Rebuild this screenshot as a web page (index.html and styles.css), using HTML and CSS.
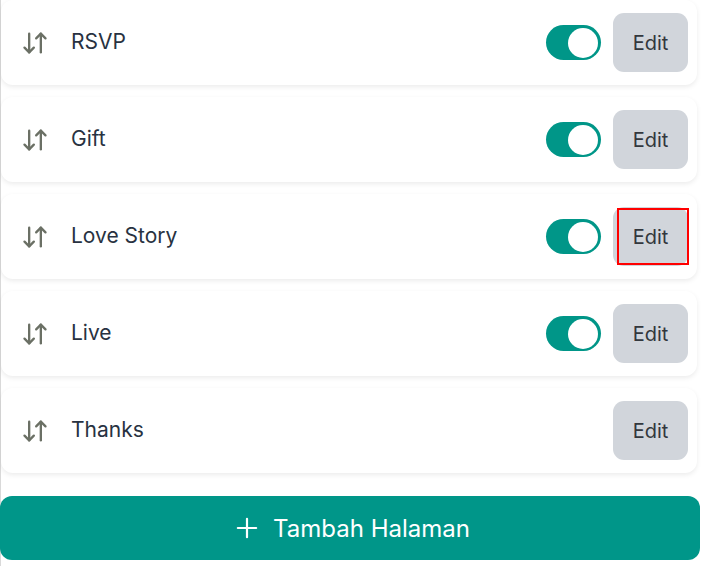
FILE: index.html
```html
<!DOCTYPE html>
<html lang="id">
<head>
<meta charset="utf-8">
<link rel="stylesheet" href="styles.css">
</head>
<body>
<div class="page">
  <div class="list">
    <div class="card">
      <svg class="drag" viewBox="0 0 24 24"><path d="m3 16 4 4 4-4"/><path d="M7 20V4"/><path d="m21 8-4-4-4 4"/><path d="M17 4v16"/></svg>
      <span class="title">RSVP</span>
      <span class="toggle"><span class="knob"></span></span>
      <button class="edit">Edit</button>
    </div>
    <div class="card">
      <svg class="drag" viewBox="0 0 24 24"><path d="m3 16 4 4 4-4"/><path d="M7 20V4"/><path d="m21 8-4-4-4 4"/><path d="M17 4v16"/></svg>
      <span class="title">Gift</span>
      <span class="toggle"><span class="knob"></span></span>
      <button class="edit">Edit</button>
    </div>
    <div class="card">
      <svg class="drag" viewBox="0 0 24 24"><path d="m3 16 4 4 4-4"/><path d="M7 20V4"/><path d="m21 8-4-4-4 4"/><path d="M17 4v16"/></svg>
      <span class="title">Love Story</span>
      <span class="toggle"><span class="knob"></span></span>
      <button class="edit">Edit<span class="highlight"></span></button>
    </div>
    <div class="card">
      <svg class="drag" viewBox="0 0 24 24"><path d="m3 16 4 4 4-4"/><path d="M7 20V4"/><path d="m21 8-4-4-4 4"/><path d="M17 4v16"/></svg>
      <span class="title">Live</span>
      <span class="toggle"><span class="knob"></span></span>
      <button class="edit">Edit</button>
    </div>
    <div class="card">
      <svg class="drag" viewBox="0 0 24 24"><path d="m3 16 4 4 4-4"/><path d="M7 20V4"/><path d="m21 8-4-4-4 4"/><path d="M17 4v16"/></svg>
      <span class="title">Thanks</span>
      <button class="edit">Edit</button>
    </div>
  </div>
  <button class="add">
    <svg class="plus" viewBox="0 0 24 24"><path d="M12 2v20M2 12h20"/></svg>
    <span>Tambah Halaman</span>
  </button>
</div>
</body>
</html>
```

FILE: styles.css
```css
* { box-sizing: border-box; }
html, body { margin: 0; padding: 0; background: #ffffff; }
body { font-family: Inter, "Noto Sans", sans-serif; }

.page {
  width: 701px;
  height: 567px;
  border-top: 1px solid #d9d9d9;
  border-left: 1px solid #d9d9d9;
  display: flex;
  flex-direction: column;
  margin-top: -1px;
}

.list {
  display: flex;
  flex-direction: column;
  gap: 12px;
  padding-right: 4px;
}

.card {
  height: 85px;
  background: #fff;
  border-radius: 12px;
  box-shadow: 0 2px 5px rgba(0, 0, 0, 0.08);
  display: flex;
  align-items: center;
  padding: 0 9px 0 20px;
}

.drag {
  width: 28px;
  height: 28px;
  fill: none;
  stroke: #6b7065;
  stroke-width: 2;
  stroke-linecap: round;
  stroke-linejoin: round;
}

.title {
  margin-left: 22px;
  font-size: 21px;
  color: #283241;
  flex: 1;
  margin-top: -2px;
}

.toggle {
  width: 55px;
  height: 35px;
  border-radius: 18px;
  background: #009688;
  display: flex;
  align-items: center;
  justify-content: flex-end;
  padding-right: 3px;
  margin-right: 12px;
}

.knob {
  width: 30px;
  height: 30px;
  border-radius: 50%;
  background: #fff;
}

.edit {
  position: relative;
  width: 75px;
  height: 59px;
  border: none;
  border-radius: 11px;
  background: #d1d5db;
  color: #33373d;
  font-family: Inter, "Noto Sans", sans-serif;
  font-size: 20px;
  padding: 0;
}

.highlight {
  position: absolute;
  left: 4px;
  top: 1px;
  right: -1px;
  bottom: 1px;
  border: 2px solid #ff0000;
}

.add {
  margin-top: 23px;
  height: 64px;
  width: 700px;
  margin-left: -1px;
  border: none;
  border-radius: 12px;
  background: #009689;
  color: #fff;
  font-family: Inter, "Noto Sans", sans-serif;
  font-size: 24px;
  display: flex;
  align-items: center;
  justify-content: center;
  gap: 15px;
  padding: 0 0 0 6px;
}

.plus {
  width: 22px;
  height: 22px;
  fill: none;
  stroke: #fff;
  stroke-width: 2.4;
  stroke-linecap: round;
}
```
